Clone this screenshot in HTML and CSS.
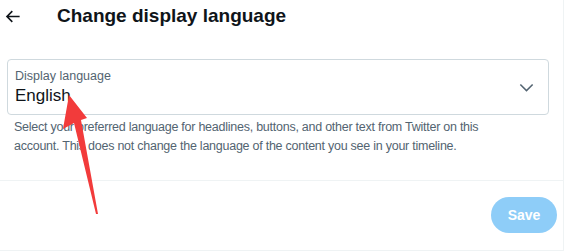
FILE: index.html
```html
<!DOCTYPE html>
<html lang="en">
<head>
  <meta charset="UTF-8">
  <meta name="viewport" content="width=device-width, initial-scale=1.0">
  <title>Change display language</title>
  <link rel="stylesheet" href="styles.css">
</head>
<body>
  <div class="page">
    <header class="topbar">
      <a href="#" class="back">
        <svg viewBox="0 0 24 24" width="19" height="19"><path d="M7.414 13l5.043 5.04-1.414 1.42L3.586 12l7.457-7.46 1.414 1.42L7.414 11H21v2H7.414z"/></svg>
      </a>
      <h1>Change display language</h1>
    </header>

    <div class="content">
      <label class="select">
        <span class="select-text">
          <span class="select-label">Display language</span>
          <span class="select-value">English</span>
        </span>
        <svg class="chevron" viewBox="0 0 24 24" width="19" height="19"><path d="M3.543 8.96l1.414-1.42L12 14.59l7.043-7.05 1.414 1.42L12 17.41 3.543 8.96z"/></svg>
      </label>
      <p class="help">Select your preferred language for headlines, buttons, and other text from Twitter on this account. This does not change the language of the content you see in your timeline.</p>
    </div>

    <div class="actions">
      <button class="save" disabled>Save</button>
    </div>
  </div>

  <!-- annotation arrow -->
  <svg class="pointer" width="565" height="251" viewBox="0 0 565 251">
    <polygon points="69,95 87,118 81,120 98,214 96,214 74,123 63,129" fill="#f23b3b"/>
  </svg>
</body>
</html>
```

FILE: styles.css
```css
body {
  margin: 0;
  font-family: "Liberation Sans", Arial, sans-serif;
  background-color: #fff;
  color: #0f1419;
}
.page {
  width: 563px;
  height: 250px;
  border-right: 1px solid #eff3f4;
  border-bottom: 1px solid #eff3f4;
}
.topbar {
  height: 32px;
  display: flex;
  align-items: center;
}
.back {
  display: flex;
  margin-left: 3px;
  color: #0f1419;
}
.back svg {
  fill: currentColor;
}
.topbar h1 {
  margin: 0 0 0 35px;
  font-size: 19px;
  font-weight: 700;
}
.content {
  padding: 27px 14px 0 7px;
  height: 121px;
  border-bottom: 1px solid #eff3f4;
}
.select {
  height: 54px;
  border: 1px solid #cfd9de;
  border-radius: 4px;
  display: flex;
  align-items: center;
  justify-content: space-between;
  padding: 0 12px 0 7px;
}
.select-text {
  display: flex;
  flex-direction: column;
}
.select-label {
  font-size: 12.5px;
  color: #536471;
  line-height: 16px;
  margin-top: 2px;
}
.select-value {
  font-size: 17px;
  line-height: 24px;
}
.chevron {
  fill: #536471;
}
.help {
  max-width: 480px;
  margin: 3px 0 0 7px;
  font-size: 12.5px;
  letter-spacing: -0.25px;
  line-height: 19px;
  color: #536471;
}
.actions {
  display: flex;
  justify-content: flex-end;
  padding: 16px 6px 0 0;
}
.save {
  width: 66px;
  height: 36px;
  border: none;
  border-radius: 18px;
  background-color: #8ecdf8;
  color: #fff;
  font-family: inherit;
  font-size: 14px;
  font-weight: 700;
}
.pointer {
  position: absolute;
  left: 0;
  top: 0;
  pointer-events: none;
}
```
